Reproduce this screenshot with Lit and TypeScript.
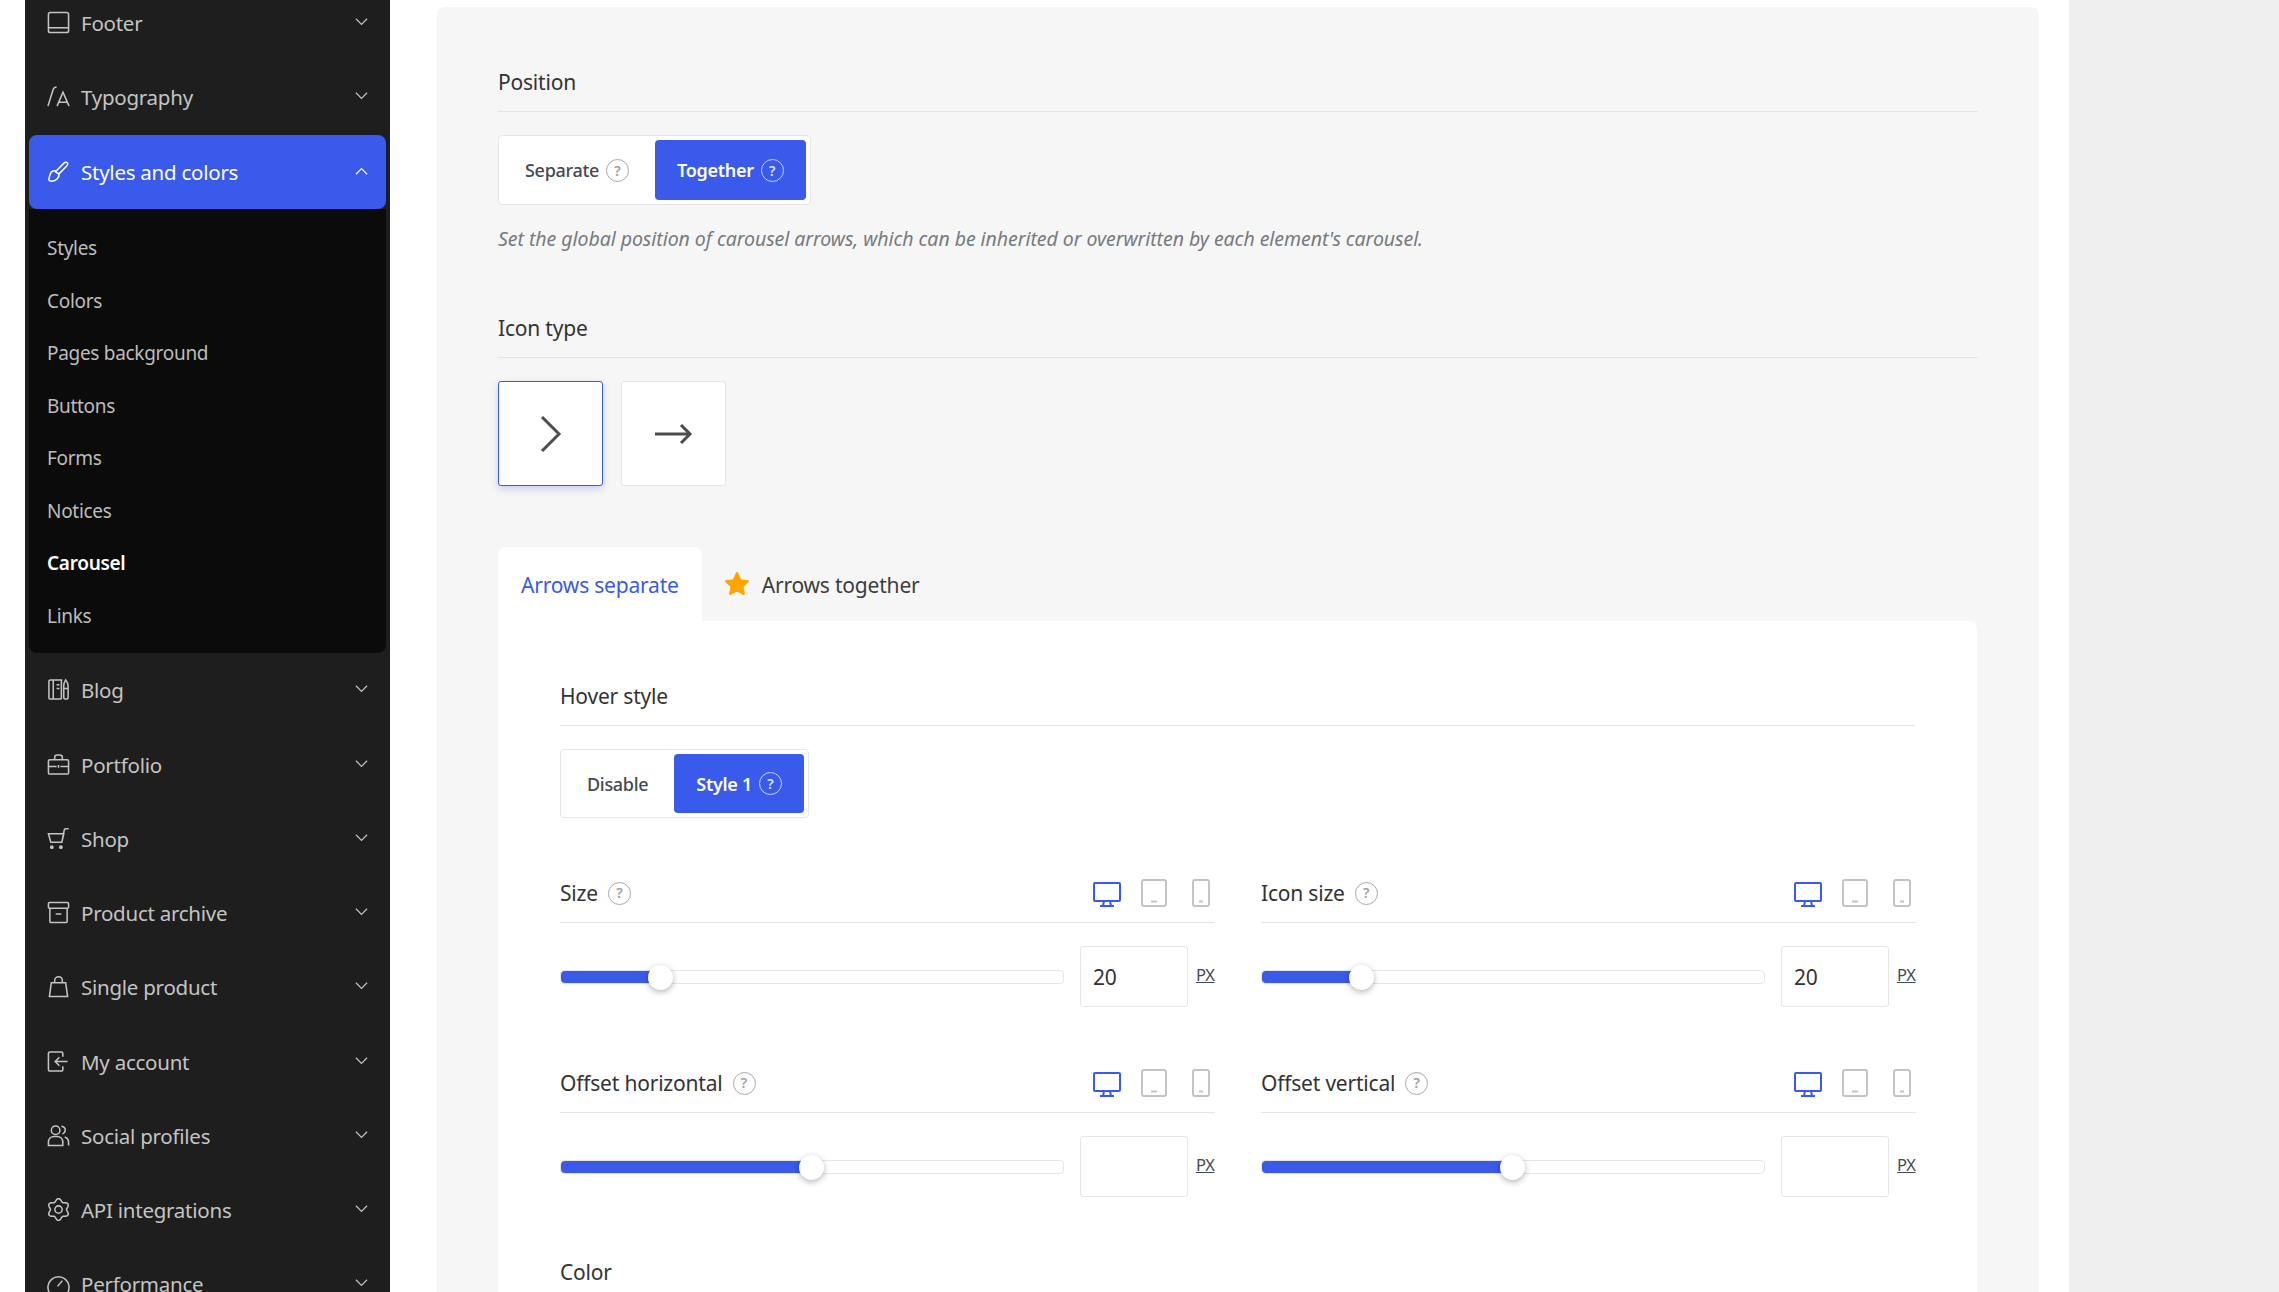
import { LitElement, css, html, svg } from 'lit';
import { customElement } from 'lit/decorators.js';

// six lobed outline for the API integrations gear
const gearOutline = Array.from({ length: 96 }, (_, i) => {
  const a = (i / 96) * Math.PI * 2;
  const r = 9.9 + 1.5 * Math.cos(6 * a);
  const x = 12 + r * Math.sin(a);
  const y = 12 - r * Math.cos(a);
  return `${x.toFixed(2)} ${y.toFixed(2)}`;
}).join('L');

const menuIcons: Record<string, unknown> = {
  footer: svg`<rect x="1.500" y="1.500" width="21" height="21" rx="2"/><path d="M1.500 17.500h21"/>`,
  type: svg`<path d="M1 22 6.500 4.500C7 3 8.500 2 10 2M10.500 22l6.200-14.500L23 22M12.500 18h8.500"/>`,
  brush: svg`<path d="M9.500 11.500 18 3c1.500-1.500 4-.5 3.500 1.500-.2.8-.6 1.400-1.200 2l-7.800 8"/><path d="M9.500 11.500c-3-.8-5.500.5-6 3-.4 2-1.500 3.500-1.500 5.500 0 1.500 1.500 2.500 4 2 3.500-.5 7-3.500 6.500-7.500"/><path d="m8.500 12 4.500 3"/>`,
  blog: svg`<path d="M8 2H3.500C2.700 2 2 2.700 2 3.500v17C2 21.300 2.700 22 3.500 22H15M6.500 2v20M8 2h8M15 2v20M10 7h3M10 11h3"/><path d="M19.500 2c-1.200 1.800-2 4-2 6v12c0 2.700 4.500 2.700 4.500 0V8c0-2-1.200-4.200-2.500-6ZM17.500 11H22"/>`,
  case: svg`<rect x="1.500" y="7" width="21" height="15" rx="1.500"/><path d="M8 7V4.500C8 3 9 2 10.500 2h3C15 2 16 3 16 4.500V7M1.500 14h8.500M14 14h8.500M12 12.500v3"/>`,
  cart: svg`<path d="M1.500 7h16l-2 9H4L1.500 7ZM15.500 16 18 3c.2-.9.800-1.200 1.500-1.200H22.500"/><circle cx="5" cy="21" r="1.200" fill="currentColor"/><circle cx="14.500" cy="21" r="1.200" fill="currentColor"/>`,
  box: svg`<rect x="1.500" y="1.500" width="21" height="6" rx="1"/><path d="M3 7.500V21.500c0 .6.400 1 1 1h16c.6 0 1-.4 1-1V7.500M9 13.500h6"/>`,
  bag: svg`<path d="M4.500 8h15l2 14.500H2.500L4.500 8ZM8 8V6c0-5.500 8-5.500 8 0v2"/>`,
  login: svg`<path d="M16.500 7V3.500c0-.8-.7-1.500-1.500-1.500H3c-.8 0-1.500.7-1.500 1.500v17c0 .8.700 1.500 1.500 1.500h12c.8 0 1.500-.7 1.500-1.500V17M21.500 12H9M13 7.500 8.500 12l4.500 4.500"/>`,
  people: svg`<circle cx="9" cy="6.500" r="4.500"/><path d="M1.500 22.500V19c0-3.500 2.500-6 6-6h3c3.500 0 6 2.500 6 6v3.500H1.500ZM15 2.300c3 .3 4.300 2.300 4 4.500-.2 1.500-1.200 3-3 3.500M18.500 13.500c2.300.8 4 3 4 5.500v3.500"/>`,
  gear: svg`<path d="M${gearOutline}Z" stroke-linejoin="round"/><circle cx="12" cy="12" r="3.800"/>`,
  gauge: svg`<path d="M2.800 22A11 11 0 1 1 21.200 22ZM11 15l5-6"/>`,
};

const chevron = (up = false) => html`<svg class="chev" viewBox="0 0 14 8">
  <path d=${up ? 'M1 7.500 7 1.500l6 6' : 'M1 .5l6 6 6-6'} />
</svg>`;

const devices = html`<span class="devices">
  <svg class="on" width="28" height="25" viewBox="0 0 28 25">
    <rect x="1" y="1" width="26" height="18" rx="1" />
    <path d="M11 19l-1 5M17 19l1 5M7 24h14" />
  </svg>
  <svg width="26" height="28" viewBox="0 0 26 28">
    <rect x="1" y="1" width="24" height="26" rx="2" />
    <path d="M10 22.500h6" />
  </svg>
  <svg class="phone" width="18" height="28" viewBox="0 0 18 28">
    <rect x="1" y="1" width="16" height="26" rx="2" />
    <path d="M7 22.500h4" />
  </svg>
</span>`;

const help = html`<span class="help">?</span>`;

interface Field {
  label: string;
  value: string;
  percent: number;
}

const fields: Field[] = [
  { label: 'Size', value: '20', percent: 19.8 },
  { label: 'Icon size', value: '20', percent: 19.8 },
  { label: 'Offset horizontal', value: '', percent: 49.8 },
  { label: 'Offset vertical', value: '', percent: 49.8 },
];

@customElement('app-root')
export class AppRoot extends LitElement {
  static override styles = css`
    :host {
      display: flex;
      height: 100vh;
      overflow: hidden;
      background: #fff;
      color: #333;
      font-family: 'Noto Sans', 'Open Sans', sans-serif;
      font-size: 21px;
      letter-spacing: -0.2px;
    }

    /* sidebar */
    .sidebar {
      flex: none;
      width: 365px;
      margin-left: 25px;
      padding: 0 4px;
      box-sizing: border-box;
      background: #1e1e1e;
    }
    .menu {
      margin-top: -14px;
    }
    .item {
      display: flex;
      align-items: center;
      height: 74.250px;
      padding: 0 18px;
      color: #c4c4c4;
      font-size: 20.500px;
      letter-spacing: -0.25px;
    }
    .item.active {
      border-radius: 8px;
      background: #3a5aeb;
      color: #fff;
    }
    .item .ico {
      flex: none;
      width: 23px;
      height: 23px;
      margin: -1px 11px 0 0;
      fill: none;
      stroke: currentColor;
      stroke-width: 1.6;
    }
    .item span {
      flex: 1;
    }
    .chev {
      flex: none;
      width: 13px;
      height: 8px;
      margin-top: -2px;
      fill: none;
      stroke: currentColor;
      stroke-width: 1.3;
    }
    .submenu {
      height: 444.500px;
      padding-top: 13.500px;
      box-sizing: border-box;
      border-radius: 0 0 8px 8px;
      background: #0b0b0b;
    }
    .submenu div {
      height: 52.500px;
      padding-left: 18px;
      line-height: 52.500px;
      color: #bdbdbd;
      font-size: 19px;
      letter-spacing: -0.3px;
    }
    .submenu div.current {
      color: #fff;
      font-weight: 600;
    }

    /* main panel */
    .panel {
      flex: none;
      align-self: flex-start;
      width: 1602px;
      margin: 7px 0 0 47px;
      padding: 60px 61px;
      box-sizing: border-box;
      border-radius: 8px;
      background: #f6f6f6;
    }
    .rest {
      flex: 1;
      margin-left: 30px;
      background: #efefef;
    }
    .head {
      display: flex;
      align-items: center;
      height: 30px;
      padding-bottom: 14px;
      border-bottom: 1px solid #e4e4e4;
      line-height: 30px;
    }
    .section {
      margin-top: 60px;
    }
    .help {
      display: inline-flex;
      flex: none;
      align-items: center;
      justify-content: center;
      width: 21px;
      height: 21px;
      margin-left: 10px;
      border: 1px solid #a8a8a8;
      border-radius: 50%;
      color: #a0a0a0;
      font-size: 14px;
      font-weight: 600;
      letter-spacing: 0;
    }
    .group {
      display: inline-flex;
      margin-top: 23px;
      padding: 4px;
      border: 1px solid #e6e6e6;
      border-radius: 4px;
      background: #fff;
      font-size: 18px;
      font-weight: 500;
      letter-spacing: -0.3px;
    }
    .group .help {
      margin-left: 7px;
    }
    .group div {
      display: flex;
      align-items: center;
      height: 60px;
      color: #444a52;
    }
    .card .group div {
      height: 59px;
    }
    .group .pad-a {
      padding: 0 26px 0 22px;
    }
    .group .pad-b {
      padding: 0 22px;
    }
    .group .active {
      border-radius: 4px;
      background: #3a5aeb;
      color: #fff;
      font-weight: 600;
    }
    .group .active .help {
      border-color: #c7d0f8;
      color: #dfe4fb;
    }
    .hint {
      margin-top: 20px;
      color: #777a80;
      font-size: 19.500px;
      font-style: italic;
      letter-spacing: -0.05px;
      line-height: 28px;
    }
    .icons {
      display: flex;
      gap: 18px;
      margin-top: 23px;
    }
    .icons div {
      display: flex;
      align-items: center;
      justify-content: center;
      width: 105px;
      height: 105px;
      box-sizing: border-box;
      border: 1px solid #e6e6e6;
      border-radius: 3px;
      background: #fff;
    }
    .icons .selected {
      border: 1px solid #3a5aeb;
      box-shadow: 0 3px 7px rgba(58, 90, 235, 0.25);
    }
    .icons svg {
      fill: none;
      stroke: #4d4d4d;
      stroke-width: 3;
    }
    .tabs {
      display: flex;
      align-items: center;
      height: 74px;
      margin-top: 61px;
    }
    .tab {
      display: flex;
      align-items: center;
      height: 100%;
      padding: 2px 23px 0;
      box-sizing: border-box;
      border-radius: 8px 8px 0 0;
      background: #fff;
      color: #3a5aeb;
    }
    .tab.plain {
      padding: 2px 0 0 22px;
      background: none;
      color: #3d3d3d;
    }
    .tab.plain svg {
      margin: -3px 12px 0 0;
    }
    .card {
      width: 1479px;
      height: 800px;
      padding: 60px 62px;
      box-sizing: border-box;
      border-radius: 0 8px 8px 8px;
      background: #fff;
    }
    .grid {
      display: grid;
      grid-template-columns: 655px 655px;
      column-gap: 46px;
      row-gap: 61px;
      margin-top: 60px;
    }
    .head .title {
      flex: 1;
      display: flex;
      align-items: center;
    }
    .devices {
      display: flex;
      align-items: flex-end;
      margin-right: 5px;
    }
    .devices svg {
      margin-left: 20px;
      fill: none;
      stroke: #c4c4c4;
      stroke-width: 2;
    }
    .devices svg.phone {
      margin-left: 25px;
    }
    .devices svg.on {
      stroke: #3a5aeb;
    }
    .control {
      display: flex;
      align-items: center;
      margin-top: 23px;
    }
    .track {
      position: relative;
      flex: 1;
      height: 14px;
      box-sizing: border-box;
      border: 1px solid #e6e6e6;
      border-radius: 4px;
    }
    .fill {
      height: 100%;
      border-radius: 4px 0 0 4px;
      background: #3a5aeb;
    }
    .thumb {
      position: absolute;
      top: -6px;
      width: 25px;
      height: 25px;
      margin-left: -12px;
      border-radius: 50%;
      background: #fff;
      box-shadow: 0 2px 6px rgba(0, 0, 0, 0.3);
    }
    .value {
      flex: none;
      width: 108px;
      height: 61px;
      margin-left: 16px;
      padding-left: 12px;
      box-sizing: border-box;
      border: 1px solid #e6e6e6;
      border-radius: 3px;
      line-height: 61px;
    }
    .unit {
      flex: none;
      width: 19px;
      margin: -5px 0 0 8px;
      color: #444a52;
      font-size: 16.500px;
      letter-spacing: -0.4px;
      text-decoration: underline;
    }
    .color {
      margin-top: 60px;
      line-height: 30px;
    }
  `;

  private renderMenuItem(icon: string, label: string) {
    return html`<div class="item">
      <svg class="ico" viewBox="0 0 24 24">${menuIcons[icon]}</svg>
      <span>${label}</span>
      ${chevron()}
    </div>`;
  }

  private renderField(f: Field) {
    return html`<div>
      <div class="head">
        <div class="title">${f.label} ${help}</div>
        ${devices}
      </div>
      <div class="control">
        <div class="track">
          <div class="fill" style="width:${f.percent}%"></div>
          <div class="thumb" style="left:${f.percent}%"></div>
        </div>
        <div class="value">${f.value}</div>
        <div class="unit">PX</div>
      </div>
    </div>`;
  }

  override render() {
    return html`
      <nav class="sidebar">
        <div class="menu">
          ${this.renderMenuItem('footer', 'Footer')}
          ${this.renderMenuItem('type', 'Typography')}
          <div class="item active">
            <svg class="ico" viewBox="0 0 24 24">${menuIcons.brush}</svg>
            <span>Styles and colors</span>
            ${chevron(true)}
          </div>
          <div class="submenu">
            <div>Styles</div>
            <div>Colors</div>
            <div>Pages background</div>
            <div>Buttons</div>
            <div>Forms</div>
            <div>Notices</div>
            <div class="current">Carousel</div>
            <div>Links</div>
          </div>
          ${this.renderMenuItem('blog', 'Blog')}
          ${this.renderMenuItem('case', 'Portfolio')}
          ${this.renderMenuItem('cart', 'Shop')}
          ${this.renderMenuItem('box', 'Product archive')}
          ${this.renderMenuItem('bag', 'Single product')}
          ${this.renderMenuItem('login', 'My account')}
          ${this.renderMenuItem('people', 'Social profiles')}
          ${this.renderMenuItem('gear', 'API integrations')}
          ${this.renderMenuItem('gauge', 'Performance')}
        </div>
      </nav>

      <main class="panel">
        <div class="head">Position</div>
        <div class="group">
          <div class="pad-a">Separate ${help}</div>
          <div class="active pad-b">Together ${help}</div>
        </div>
        <div class="hint">
          Set the global position of carousel arrows, which can be inherited or
          overwritten by each element's carousel.
        </div>

        <div class="section head">Icon type</div>
        <div class="icons">
          <div class="selected">
            <svg width="24" height="38" viewBox="0 0 24 38"><path d="M3 2l17 17L3 36" /></svg>
          </div>
          <div>
            <svg width="38" height="20" viewBox="0 0 38 20"><path d="M0 10h35M26 1l9 9-9 9" /></svg>
          </div>
        </div>

        <div class="tabs">
          <div class="tab">Arrows separate</div>
          <div class="tab plain">
            <svg width="26" height="25" viewBox="0 0 26 25">
              <path
                fill="#ffa500"
                stroke="#ffa500"
                stroke-width="2"
                stroke-linejoin="round"
                d="M13 2l3.400 7.200 7.600 1-5.500 5.300 1.400 7.500L13 19.300 6.100 23l1.400-7.500L2 10.200l7.600-1L13 2Z"
              />
            </svg>
            Arrows together
          </div>
        </div>
        <div class="card">
          <div class="head">Hover style</div>
          <div class="group">
            <div class="pad-a">Disable</div>
            <div class="active pad-b">Style 1 ${help}</div>
          </div>
          <div class="grid">${fields.map((f) => this.renderField(f))}</div>
          <div class="color">Color</div>
        </div>
      </main>
      <div class="rest"></div>
    `;
  }
}
